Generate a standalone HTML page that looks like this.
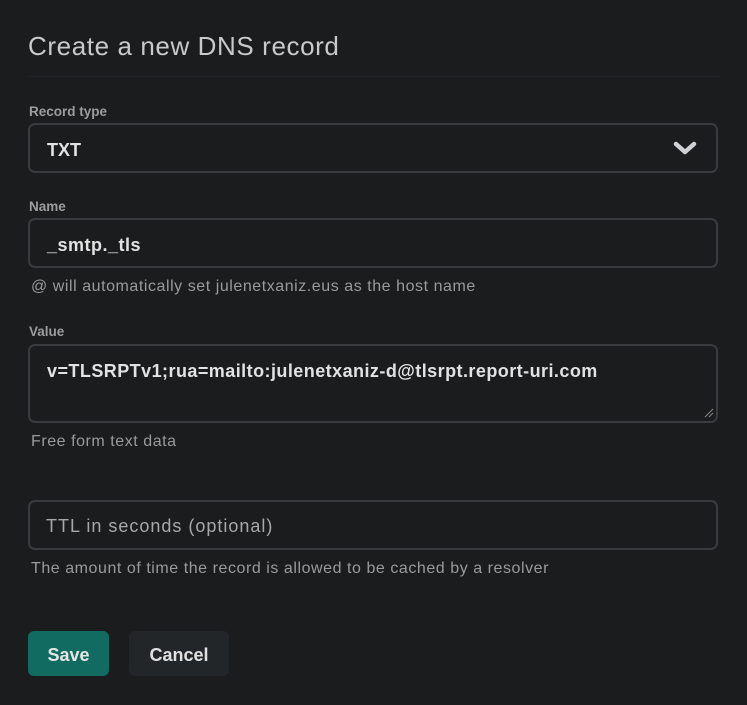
<!DOCTYPE html>
<html><head><style>
body{margin:0;background:#1b1c1e;width:747px;height:705px;overflow:hidden;font-family:"Liberation Sans",sans-serif;color:#d4d4d4;position:relative}
.a{position:absolute}
h1{position:absolute;left:28px;top:31px;margin:0;font-size:26px;font-weight:normal;color:#c9c9c9;letter-spacing:0.6px}
.hr{left:28px;top:76px;width:692px;height:1px;background:#222326}
.lbl{font-size:13.5px;font-weight:bold;color:#9d9d9d}
.box{border:2px solid #3a3b3e;border-radius:7px;box-sizing:border-box;left:28px;width:690px}
.val{font-size:18px;font-weight:bold;color:#e2e2e2}
.help{font-size:16px;color:#9a9a9a;letter-spacing:0.55px}
</style></head><body>
<h1>Create a new DNS record</h1>
<div class="a hr"></div>
<div class="a lbl" style="left:29px;top:104px">Record type</div>
<div class="a box" style="top:123px;height:50px"></div>
<div class="a val" style="left:47px;top:140px">TXT</div>
<svg class="a" style="left:673px;top:140px" width="24" height="16" viewBox="0 0 24 16"><path d="M3 4 L12 12 L21 4" fill="none" stroke="#cfd1d4" stroke-width="4.5" stroke-linecap="round" stroke-linejoin="round"/></svg>
<div class="a lbl" style="left:29px;top:199px">Name</div>
<div class="a box" style="top:218px;height:50px"></div>
<div class="a val" style="left:47px;top:235px;letter-spacing:0.5px">_smtp._tls</div>
<div class="a help" style="left:31px;top:278px">@ will automatically set julenetxaniz.eus as the host name</div>
<div class="a lbl" style="left:29px;top:324px">Value</div>
<div class="a box" style="top:344px;height:79px"></div>
<div class="a val" style="left:47px;top:361px;letter-spacing:0.45px">v=TLSRPTv1;rua=mailto:julenetxaniz-d@tlsrpt.report-uri.com</div>
<svg class="a" style="left:704px;top:408px" width="10" height="10"><path d="M1 9L9 1M5 9L9 5" stroke="#888" stroke-width="1"/></svg>
<div class="a help" style="left:31px;top:433px">Free form text data</div>
<div class="a box" style="top:500px;height:50px"></div>
<div class="a" style="left:46px;top:516px;font-size:18px;color:#a8a8a8;letter-spacing:1px">TTL in seconds (optional)</div>
<div class="a help" style="left:31px;top:560px">The amount of time the record is allowed to be cached by a resolver</div>
<div class="a" style="left:28px;top:631px;width:81px;height:45px;background:#116b60;border-radius:6px"></div>
<div class="a" style="left:28px;top:645px;width:81px;text-align:center;font-size:18px;font-weight:bold;color:#e6e6e6">Save</div>
<div class="a" style="left:129px;top:631px;width:100px;height:45px;background:#232629;border-radius:6px"></div>
<div class="a" style="left:129px;top:645px;width:100px;text-align:center;font-size:18px;font-weight:bold;color:#e0e0e0">Cancel</div>
</body></html>
